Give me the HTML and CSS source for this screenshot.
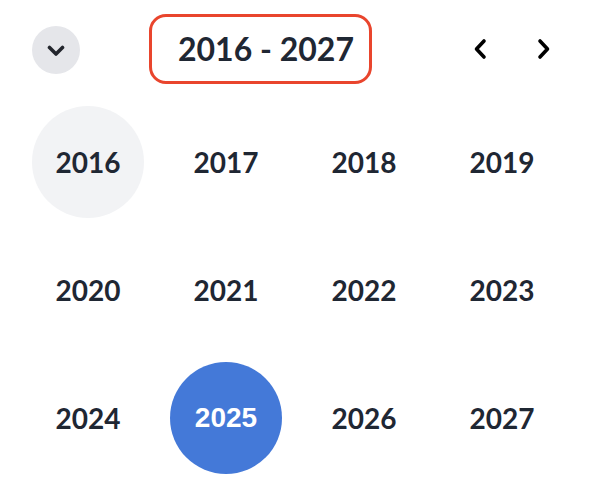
FILE: index.html
```html
<!DOCTYPE html>
<html>
<head>
<meta charset="utf-8">
<link rel="stylesheet" href="styles.css">
</head>
<body>
<div class="picker">
  <div class="header">
    <button class="toggle" aria-label="Collapse">
      <svg width="18" height="12" viewBox="0 0 18 12"><path d="M2.5 2.5 L9 9 L15.5 2.5" fill="none" stroke="#23262d" stroke-width="3.6" stroke-linecap="round" stroke-linejoin="round"/></svg>
    </button>
    <div class="range">2016 - 2027</div>
    <div class="nav">
      <button class="arrow" aria-label="Previous">
        <svg width="14" height="22" viewBox="0 0 14 22"><path d="M11 3 L3.5 11 L11 19" fill="none" stroke="#000" stroke-width="3.6" stroke-linecap="round" stroke-linejoin="round"/></svg>
      </button>
      <button class="arrow" aria-label="Next">
        <svg width="14" height="22" viewBox="0 0 14 22"><path d="M3 3 L10.5 11 L3 19" fill="none" stroke="#000" stroke-width="3.6" stroke-linecap="round" stroke-linejoin="round"/></svg>
      </button>
    </div>
  </div>
  <div class="grid">
    <div class="cell"><span class="year hover">2016</span></div>
    <div class="cell"><span class="year">2017</span></div>
    <div class="cell"><span class="year">2018</span></div>
    <div class="cell"><span class="year">2019</span></div>
    <div class="cell"><span class="year">2020</span></div>
    <div class="cell"><span class="year">2021</span></div>
    <div class="cell"><span class="year">2022</span></div>
    <div class="cell"><span class="year">2023</span></div>
    <div class="cell"><span class="year">2024</span></div>
    <div class="cell"><span class="year selected">2025</span></div>
    <div class="cell"><span class="year">2026</span></div>
    <div class="cell"><span class="year">2027</span></div>
  </div>
</div>
</body>
</html>
```
FILE: styles.css
```css
html, body {
  margin: 0;
  padding: 0;
  background: #ffffff;
}
body {
  font-family: Lato, "Noto Sans", sans-serif;
  color: #1f2733;
}
.picker {
  width: 594px;
  height: 494px;
  box-sizing: border-box;
  padding-top: 14px;
}
.header {
  display: flex;
  align-items: center;
  height: 70px;
  padding: 0 30px 0 32px;
}
.toggle {
  width: 48px;
  height: 48px;
  border-radius: 50%;
  border: none;
  background: #e5e6ea;
  display: flex;
  align-items: center;
  justify-content: center;
  padding: 0;
  margin-top: 2px;
}
.toggle svg {
  margin-top: 1px;
}
.range {
  margin-left: 69px;
  width: 223px;
  height: 70px;
  box-sizing: border-box;
  border: 3px solid #e9452d;
  border-radius: 17px;
  padding-left: 26px;
  display: flex;
  align-items: center;
  font-size: 32px;
  font-weight: 700;
  color: #1f2733;
  padding-bottom: 2px;
}
.nav {
  margin-left: auto;
  display: flex;
  gap: 24px;
}
.arrow {
  width: 40px;
  height: 40px;
  border: none;
  background: transparent;
  padding: 0;
  display: flex;
  align-items: center;
  justify-content: center;
}
.grid {
  display: grid;
  grid-template-columns: repeat(4, 138px);
  grid-auto-rows: 128px;
  margin: 14px 0 0 19px;
}
.cell {
  display: flex;
  align-items: center;
  justify-content: center;
}
.year {
  width: 112px;
  height: 112px;
  border-radius: 50%;
  display: flex;
  align-items: center;
  justify-content: center;
  font-size: 28px;
  font-weight: 700;
  color: #1f2733;
}
.year.hover {
  background: #f2f3f5;
}
.year.selected {
  background: #4479d8;
  color: #ffffff;
  font-family: "Liberation Sans", Arial, sans-serif;
}
```
